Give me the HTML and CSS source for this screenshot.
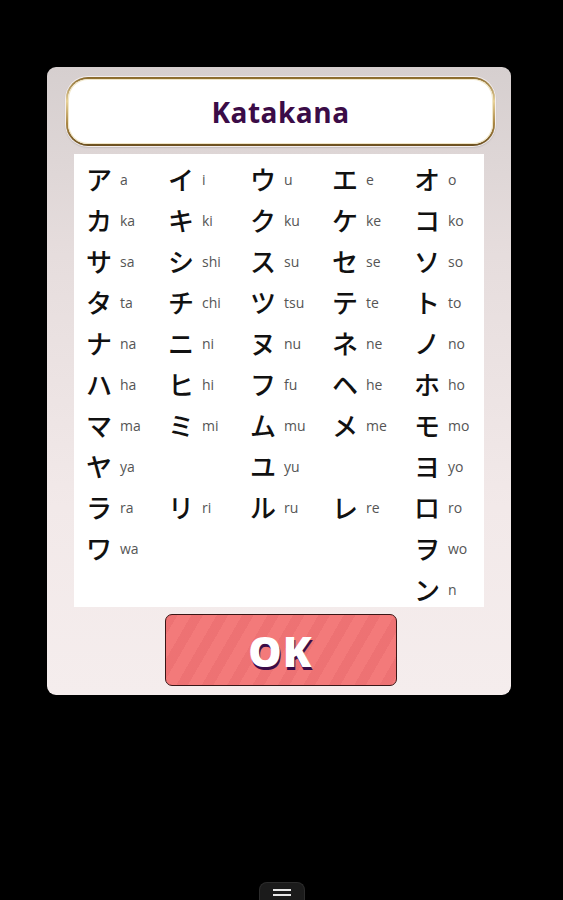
FILE: index.html
```html
<!DOCTYPE html>
<html lang="ja">
<head>
<meta charset="utf-8">
<link rel="stylesheet" href="styles.css">
</head>
<body>
<div class="screen">
  <div class="dialog">
    <div class="title-wrap"><div class="title">Katakana</div></div>
    <div class="table">
      <div class="cell"><span class="k">ア</span><span class="r">a</span></div>
      <div class="cell"><span class="k">イ</span><span class="r">i</span></div>
      <div class="cell"><span class="k">ウ</span><span class="r">u</span></div>
      <div class="cell"><span class="k">エ</span><span class="r">e</span></div>
      <div class="cell"><span class="k">オ</span><span class="r">o</span></div>

      <div class="cell"><span class="k">カ</span><span class="r">ka</span></div>
      <div class="cell"><span class="k">キ</span><span class="r">ki</span></div>
      <div class="cell"><span class="k">ク</span><span class="r">ku</span></div>
      <div class="cell"><span class="k">ケ</span><span class="r">ke</span></div>
      <div class="cell"><span class="k">コ</span><span class="r">ko</span></div>

      <div class="cell"><span class="k">サ</span><span class="r">sa</span></div>
      <div class="cell"><span class="k">シ</span><span class="r">shi</span></div>
      <div class="cell"><span class="k">ス</span><span class="r">su</span></div>
      <div class="cell"><span class="k">セ</span><span class="r">se</span></div>
      <div class="cell"><span class="k">ソ</span><span class="r">so</span></div>

      <div class="cell"><span class="k">タ</span><span class="r">ta</span></div>
      <div class="cell"><span class="k">チ</span><span class="r">chi</span></div>
      <div class="cell"><span class="k">ツ</span><span class="r">tsu</span></div>
      <div class="cell"><span class="k">テ</span><span class="r">te</span></div>
      <div class="cell"><span class="k">ト</span><span class="r">to</span></div>

      <div class="cell"><span class="k">ナ</span><span class="r">na</span></div>
      <div class="cell"><span class="k">ニ</span><span class="r">ni</span></div>
      <div class="cell"><span class="k">ヌ</span><span class="r">nu</span></div>
      <div class="cell"><span class="k">ネ</span><span class="r">ne</span></div>
      <div class="cell"><span class="k">ノ</span><span class="r">no</span></div>

      <div class="cell"><span class="k">ハ</span><span class="r">ha</span></div>
      <div class="cell"><span class="k">ヒ</span><span class="r">hi</span></div>
      <div class="cell"><span class="k">フ</span><span class="r">fu</span></div>
      <div class="cell"><span class="k">ヘ</span><span class="r">he</span></div>
      <div class="cell"><span class="k">ホ</span><span class="r">ho</span></div>

      <div class="cell"><span class="k">マ</span><span class="r">ma</span></div>
      <div class="cell"><span class="k">ミ</span><span class="r">mi</span></div>
      <div class="cell"><span class="k">ム</span><span class="r">mu</span></div>
      <div class="cell"><span class="k">メ</span><span class="r">me</span></div>
      <div class="cell"><span class="k">モ</span><span class="r">mo</span></div>

      <div class="cell"><span class="k">ヤ</span><span class="r">ya</span></div>
      <div class="cell"></div>
      <div class="cell"><span class="k">ユ</span><span class="r">yu</span></div>
      <div class="cell"></div>
      <div class="cell"><span class="k">ヨ</span><span class="r">yo</span></div>

      <div class="cell"><span class="k">ラ</span><span class="r">ra</span></div>
      <div class="cell"><span class="k">リ</span><span class="r">ri</span></div>
      <div class="cell"><span class="k">ル</span><span class="r">ru</span></div>
      <div class="cell"><span class="k">レ</span><span class="r">re</span></div>
      <div class="cell"><span class="k">ロ</span><span class="r">ro</span></div>

      <div class="cell"><span class="k">ワ</span><span class="r">wa</span></div>
      <div class="cell"></div>
      <div class="cell"></div>
      <div class="cell"></div>
      <div class="cell"><span class="k">ヲ</span><span class="r">wo</span></div>

      <div class="cell"></div>
      <div class="cell"></div>
      <div class="cell"></div>
      <div class="cell"></div>
      <div class="cell"><span class="k">ン</span><span class="r">n</span></div>
    </div>
    <div class="btn-row"><div class="ok"><span>OK</span></div></div>
  </div>
  <div class="navbar"><div class="menu-btn"><span class="line"></span><span class="line"></span></div></div>
</div>
</body>
</html>
```

FILE: styles.css
```css
* { box-sizing: border-box; }
html, body { margin: 0; padding: 0; background: #000; }
.screen {
  width: 563px;
  height: 900px;
  background: #000;
  padding-top: 67px;
  padding-left: 47px;
  display: flex;
  flex-direction: column;
}
.dialog {
  width: 464px;
  height: 628px;
  border-radius: 9px;
  background: linear-gradient(180deg, #d6cfcf 0%, #e6dddd 30%, #f2e9e9 70%, #f5eded 100%);
  padding: 10px 16px 9px 19px;
  display: flex;
  flex-direction: column;
}
.title-wrap {
  height: 69px;
  border-radius: 22px;
  padding: 2px;
  background: linear-gradient(180deg, #8a6a2c 0%, #e8d29a 35%, #a4803d 70%, #6c5020 100%);
  box-shadow: 0 0 0 1px #f4eeee, 0 1px 2px rgba(0,0,0,0.35);
}
.title {
  height: 100%;
  border-radius: 20px;
  background: #fff;
  box-shadow: inset 0 0 0 1px #f0e6c8;
  display: flex;
  align-items: center;
  justify-content: center;
  font-family: "Open Sans", sans-serif;
  font-weight: 700;
  font-size: 28px;
  color: #3b0c47;
  letter-spacing: 0.5px;
}
.table {
  margin: 8px 11px 0 8px;
  height: 453px;
  background: #fff;
  display: grid;
  grid-template-columns: repeat(5, 82px);
  grid-auto-rows: 41px;
  padding: 4px 0 0 12px;
}
.cell {
  display: flex;
  align-items: center;
}
.k {
  font-family: "Noto Sans CJK JP", sans-serif;
  font-size: 26px;
  font-weight: 500;
  color: #111;
  width: 34px;
  line-height: 1;
}
.r {
  font-family: "Open Sans", sans-serif;
  font-size: 14px;
  color: #555;
  padding-top: 1px;
}
.btn-row {
  display: flex;
  justify-content: center;
  padding-top: 7px;
}
.ok {
  width: 232px;
  height: 72px;
  border-radius: 7px;
  border: 1.5px solid #3a1616;
  background-color: #f37a7a;
  background-image: repeating-linear-gradient(120deg, rgba(200,60,70,0.13) 0 10px, transparent 10px 22px);
  display: flex;
  align-items: center;
  justify-content: center;
}
.ok span {
  font-family: "Open Sans", sans-serif;
  font-weight: 800;
  font-size: 42px;
  color: #fff;
  text-shadow: 1px 3px 0 #3b0c47;
  letter-spacing: 1px;
}
.navbar {
  margin-top: auto;
  height: 18px;
  display: flex;
  justify-content: center;
  padding-right: 47px;
}
.menu-btn {
  width: 46px;
  height: 18px;
  border-radius: 8px 8px 0 0;
  background: #1b1b1b;
  border: 1px solid #2c2c2c;
  border-bottom: 0;
  display: flex;
  flex-direction: column;
  align-items: center;
  justify-content: center;
  gap: 3px;
  padding-top: 2px;
}
.line {
  width: 18px;
  height: 2px;
  background: #e8e8e8;
}
```
